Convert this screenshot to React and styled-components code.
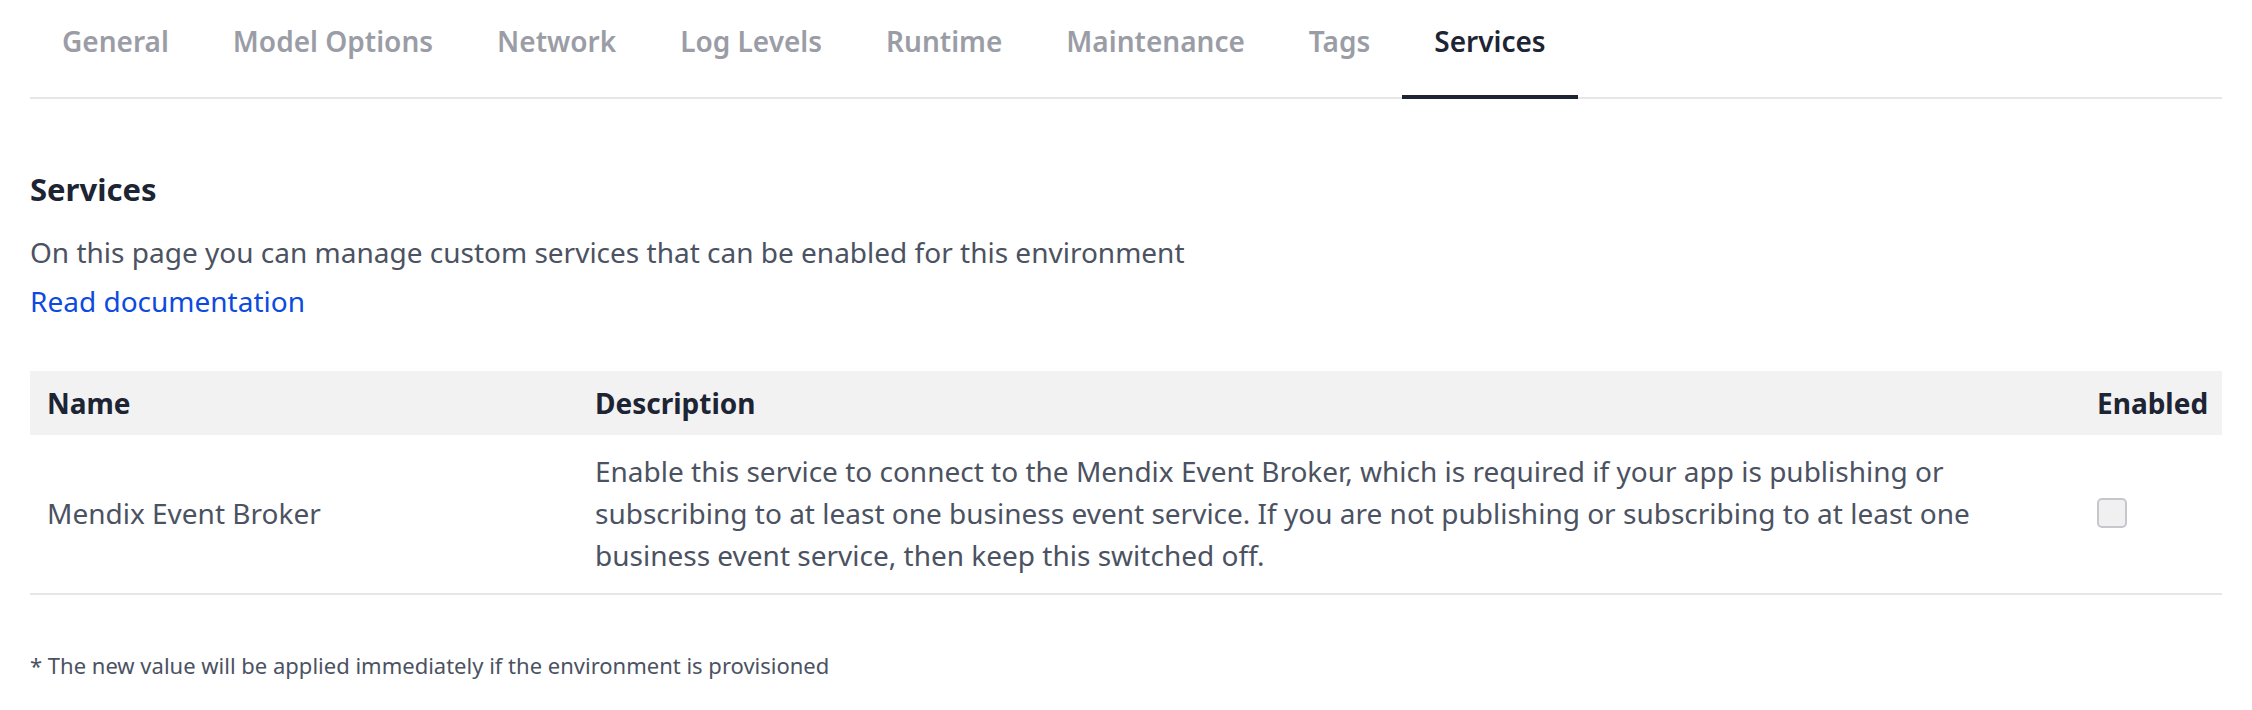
import styled, { createGlobalStyle } from "styled-components";
import { useState } from "react";

const GlobalStyle = createGlobalStyle`
    body{
        margin:0;
        background:#ffffff;
        font-family:"Noto Sans", "Open Sans", sans-serif;
        color:#4b5262;
    }
`;

const PageWrapper = styled.div`
    padding:0 30px;
`;

const TabList = styled.div`
    display:flex;
    border-bottom:2px solid #e6e6e6;
`;

const Tab = styled.div`
    padding:20px 32px 33px;
    margin-bottom:-2px;
    font-size:28px;
    line-height:42px;
    font-weight:600;
    color:${props => props.active ? "#1d2433" : "#9b9da6"};
    border-bottom:4px solid ${props => props.active ? "#1d2433" : "transparent"};
    cursor:pointer;
`;

const Section = styled.div`
    padding-top:68px;
`;

const Title = styled.h2`
    margin:0;
    font-size:31px;
    line-height:44px;
    font-weight:700;
    color:#1d2433;
`;

const Text = styled.p`
    margin:20px 0 0;
    font-size:28px;
    line-height:42px;
`;

const DocLink = styled.a`
    display:block;
    margin-top:7px;
    font-size:28px;
    line-height:42px;
    color:#0d4ae0;
    text-decoration:none;
`;

const Grid = styled.div`
    margin-top:49px;
    display:grid;
    grid-template-columns:548px 1fr 142px;
    border-bottom:2px solid #e6e6e6;
`;

const HeadCell = styled.div`
    background:#f2f2f2;
    padding:11px ${props => props.right ? "16px" : "17px"} 11px 17px;
    font-size:28px;
    line-height:42px;
    font-weight:700;
    color:#1d2433;
    text-align:${props => props.right ? "right" : "left"};
`;

const Cell = styled.div`
    display:flex;
    align-items:center;
    padding:15px 17px 17px;
    font-size:28px;
    line-height:42px;
`;

const CheckBox = styled.span`
    display:inline-block;
    width:26px;
    height:26px;
    border:2px solid #c6c6cc;
    border-radius:5px;
    background:${props => props.checked ? "#1d2433" : "#f0f0f0"};
    cursor:pointer;
`;

const Footnote = styled.div`
    margin-top:55px;
    font-size:22px;
    line-height:30px;
`;

const tabs = ["General", "Model Options", "Network", "Log Levels", "Runtime", "Maintenance", "Tags", "Services"];

const App = () => {
    const [curTab, setCurTab] = useState("Services");
    const [enabled, setEnabled] = useState(false);

    return (
        <PageWrapper>
            <GlobalStyle/>
            <TabList>
                {
                    tabs.map(val => (
                        <Tab key={val} active={curTab === val} onClick={() => setCurTab(val)}>{val}</Tab>
                    ))
                }
            </TabList>
            <Section>
                <Title>Services</Title>
                <Text>On this page you can manage custom services that can be enabled for this environment</Text>
                <DocLink href="#">Read documentation</DocLink>
                <Grid>
                    <HeadCell>Name</HeadCell>
                    <HeadCell>Description</HeadCell>
                    <HeadCell right>Enabled</HeadCell>
                    <Cell>Mendix Event Broker</Cell>
                    <Cell>Enable this service to connect to the Mendix Event Broker, which is required if your app is publishing or subscribing to at least one business event service. If you are not publishing or subscribing to at least one business event service, then keep this switched off.</Cell>
                    <Cell>
                        <CheckBox checked={enabled} onClick={() => setEnabled(!enabled)}/>
                    </Cell>
                </Grid>
                <Footnote>* The new value will be applied immediately if the environment is provisioned</Footnote>
            </Section>
        </PageWrapper>
    )
}

export default App;
